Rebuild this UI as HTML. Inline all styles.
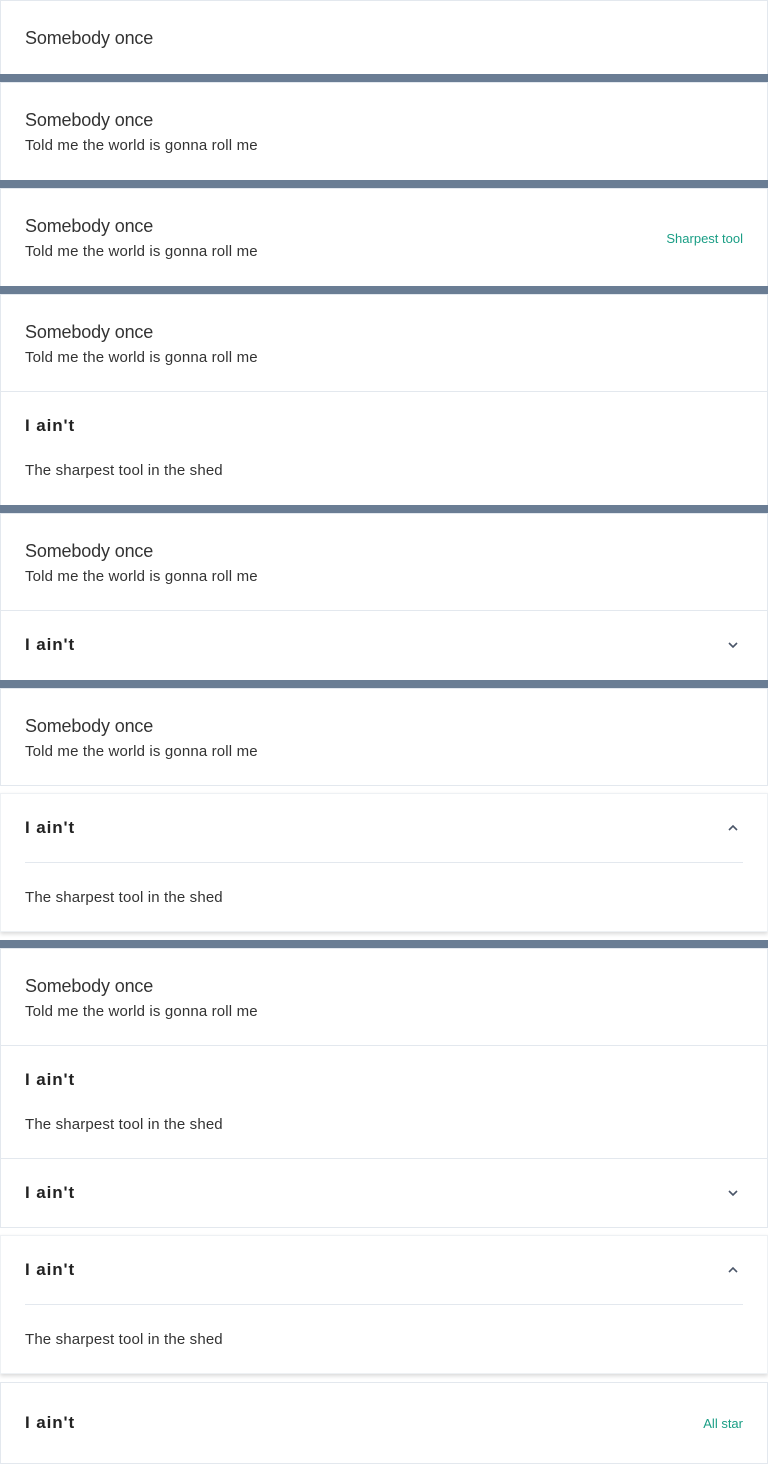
<!DOCTYPE html>
<html><head><meta charset="utf-8"><style>
*{margin:0;padding:0;box-sizing:border-box}
html,body{width:768px;height:1464px;background:#fff;overflow:hidden}
body{position:relative;font-family:"Liberation Sans",sans-serif;color:#2e3138}
.c{position:absolute;left:0;width:768px;background:#fff;border:1px solid #e3e8ee}
.sh{box-shadow:0 2px 4px rgba(0,0,0,.15);border-color:#eef1f4}
.bar{position:absolute;left:0;width:768px;height:8px;background:#6a7d94}
.t{position:absolute;left:25px;font-size:18px;line-height:20px;color:#333;letter-spacing:-0.15px;margin-top:1px}
.s{position:absolute;left:25px;font-size:15px;line-height:18px;color:#333;letter-spacing:0.15px;margin-top:1px}
.b{position:absolute;left:25px;font-size:17px;line-height:20px;font-weight:bold;color:#222;letter-spacing:0.9px;margin-top:1px}
.g{position:absolute;right:25px;font-size:13px;line-height:16px;color:#1a9e85;margin-top:1px}
.hr{position:absolute;left:25px;width:718px;height:1px;background:#e3e8ee}
.ch{position:absolute;left:727px;width:12px;height:8px}
</style></head><body>
<div class="c" style="top:0;height:75px"></div>
<div class="t" style="top:27px">Somebody once</div>
<div class="bar" style="top:74px"></div>

<div class="c" style="top:82px;height:99px"></div>
<div class="t" style="top:109px">Somebody once</div>
<div class="s" style="top:136px">Told me the world is gonna roll me</div>
<div class="bar" style="top:180px"></div>

<div class="c" style="top:188px;height:99px"></div>
<div class="t" style="top:215px">Somebody once</div>
<div class="s" style="top:242px">Told me the world is gonna roll me</div>
<div class="g" style="top:230px">Sharpest tool</div>
<div class="bar" style="top:286px"></div>

<div class="c" style="top:294px;height:212px"></div>
<div class="t" style="top:321px">Somebody once</div>
<div class="s" style="top:348px">Told me the world is gonna roll me</div>
<div style="position:absolute;top:391px;left:0;width:768px;height:1px;background:#e3e8ee"></div>
<div class="b" style="top:415px">I ain't</div>
<div class="s" style="top:461px">The sharpest tool in the shed</div>
<div class="bar" style="top:505px"></div>

<div class="c" style="top:513px;height:168px"></div>
<div class="t" style="top:540px">Somebody once</div>
<div class="s" style="top:567px">Told me the world is gonna roll me</div>
<div style="position:absolute;top:610px;left:0;width:768px;height:1px;background:#e3e8ee"></div>
<div class="b" style="top:634px">I ain't</div>
<svg class="ch" style="top:641px" viewBox="0 0 12 8"><path d="M2 2l4 4 4-4" fill="none" stroke="#4a5568" stroke-width="1.6"/></svg>
<div class="bar" style="top:680px"></div>

<div class="c" style="top:688px;height:98px"></div>
<div class="t" style="top:715px">Somebody once</div>
<div class="s" style="top:742px">Told me the world is gonna roll me</div>

<div class="c sh" style="top:793px;height:139px"></div>
<div class="b" style="top:817px">I ain't</div>
<svg class="ch" style="top:824px" viewBox="0 0 12 8"><path d="M2 6l4-4 4 4" fill="none" stroke="#4a5568" stroke-width="1.6"/></svg>
<div class="hr" style="top:862px"></div>
<div class="s" style="top:888px">The sharpest tool in the shed</div>
<div class="bar" style="top:940px"></div>

<div class="c" style="top:948px;height:280px"></div>
<div class="t" style="top:975px">Somebody once</div>
<div class="s" style="top:1002px">Told me the world is gonna roll me</div>
<div style="position:absolute;top:1045px;left:0;width:768px;height:1px;background:#e3e8ee"></div>
<div class="b" style="top:1069px">I ain't</div>
<div class="s" style="top:1115px">The sharpest tool in the shed</div>
<div style="position:absolute;top:1158px;left:0;width:768px;height:1px;background:#e3e8ee"></div>
<div class="b" style="top:1182px">I ain't</div>
<svg class="ch" style="top:1189px" viewBox="0 0 12 8"><path d="M2 2l4 4 4-4" fill="none" stroke="#4a5568" stroke-width="1.6"/></svg>

<div class="c sh" style="top:1235px;height:139px"></div>
<div class="b" style="top:1259px">I ain't</div>
<svg class="ch" style="top:1266px" viewBox="0 0 12 8"><path d="M2 6l4-4 4 4" fill="none" stroke="#4a5568" stroke-width="1.6"/></svg>
<div class="hr" style="top:1304px"></div>
<div class="s" style="top:1330px">The sharpest tool in the shed</div>

<div class="c" style="top:1382px;height:82px"></div>
<div class="b" style="top:1412px">I ain't</div>
<div class="g" style="top:1415px">All star</div>
</body></html>
